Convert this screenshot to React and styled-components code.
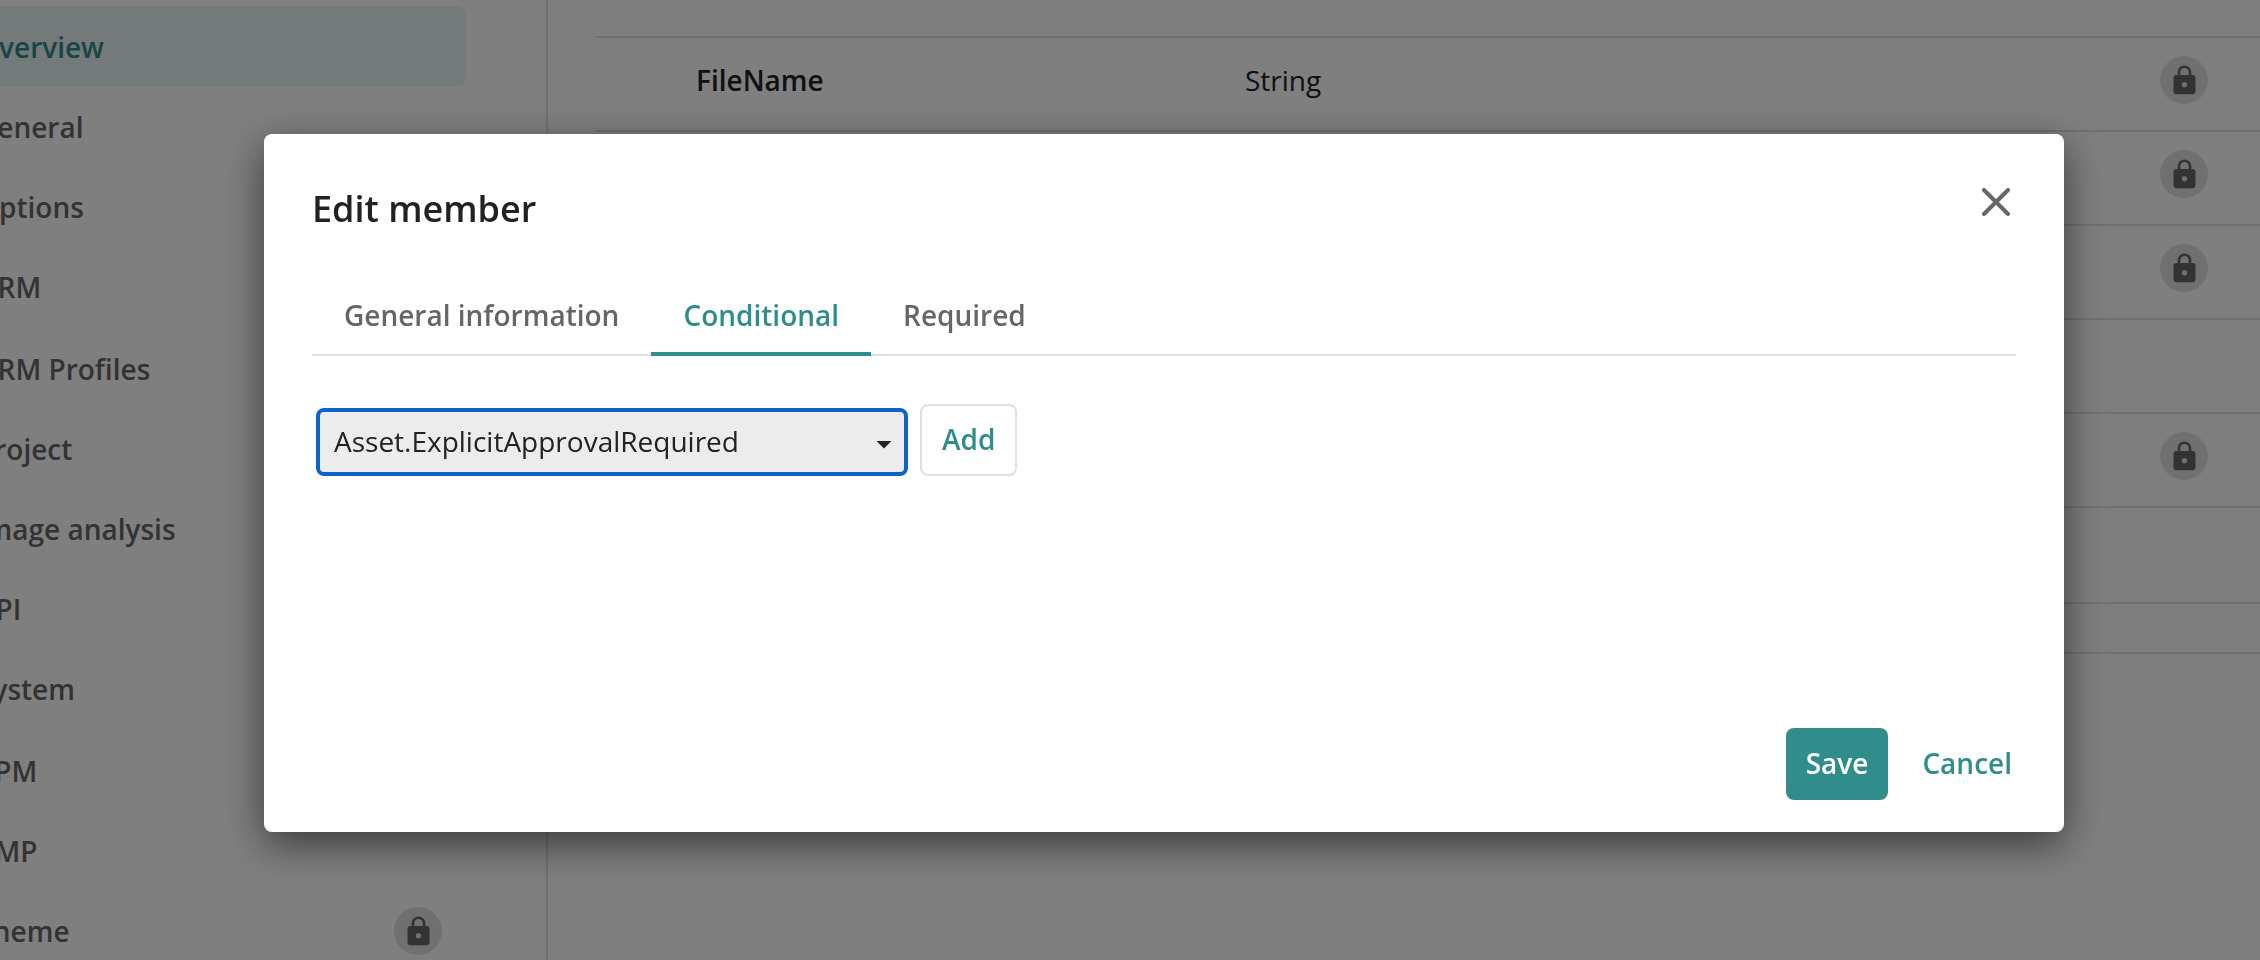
import { useState } from "react";
import styled, { createGlobalStyle } from "styled-components";
import { MdClose, MdLock, MdArrowDropDown } from "react-icons/md";

const menuGroups = [
  ["Overview", "General", "Options", "DRM"],
  ["DRM Profiles", "Project", "Image analysis", "API", "System"],
  ["PPM", "XMP", "Theme"],
];

const members = [
  { name: "FileName", type: "String", locked: true },
  { locked: true },
  { locked: true },
  {},
  { locked: true },
  {},
];

const tabs = ["General information", "Conditional", "Required"];

function Lock() {
  return (
    <LockBadge>
      <MdLock size={33} />
    </LockBadge>
  );
}

function EditMember() {
  const [active, setActive] = useState("Conditional");

  return (
    <Dialog role="dialog" aria-modal="true" aria-labelledby="dialog-title">
      <DialogHeader>
        <h2 id="dialog-title">Edit member</h2>
        <CloseButton type="button" aria-label="Close">
          <svg width="28" height="28" viewBox="0 0 28 28">
            <path
              d="M2 2l24 24M26 2L2 26"
              stroke="currentColor"
              strokeWidth="4"
              strokeLinecap="round"
            />
          </svg>
        </CloseButton>
      </DialogHeader>
      <Tabs role="tablist">
        {tabs.map((tab) => (
          <Tab
            key={tab}
            type="button"
            role="tab"
            aria-selected={tab === active}
            $active={tab === active}
            onClick={() => setActive(tab)}
          >
            {tab}
          </Tab>
        ))}
      </Tabs>
      <Condition>
        <SelectBox>
          <select aria-label="Condition" defaultValue="explicit">
            <option value="explicit">Asset.ExplicitApprovalRequired</option>
          </select>
          <MdArrowDropDown size={36} />
        </SelectBox>
        <Button type="button" $variant="outline">
          Add
        </Button>
      </Condition>
      <Actions>
        <Button type="button" $variant="primary">
          Save
        </Button>
        <Button type="button">Cancel</Button>
      </Actions>
    </Dialog>
  );
}

export default function App() {
  return (
    <>
      <GlobalStyle />
      <Page>
        <Sidebar>
          {menuGroups.map((group) => (
            <MenuGroup key={group[0]}>
              {group.map((item) => (
                <MenuItem key={item} $active={item === "Overview"}>
                  <a href="#">{item}</a>
                  {item === "Theme" && <Lock />}
                </MenuItem>
              ))}
            </MenuGroup>
          ))}
        </Sidebar>
        <Content>
          <MemberTable>
            <tbody>
              {members.map(({ name, type, locked }, i) => (
                <tr key={i}>
                  <NameCell scope="row">{name}</NameCell>
                  <td>{type}</td>
                  <LockCell>{locked && <Lock />}</LockCell>
                </tr>
              ))}
            </tbody>
          </MemberTable>
          <TableFooter />
        </Content>
      </Page>
      <Backdrop>
        <EditMember />
      </Backdrop>
    </>
  );
}

const GlobalStyle = createGlobalStyle`
  * {
    box-sizing: border-box;
  }

  body {
    margin: 0;
    overflow: hidden;
    background-color: #fff;
    color: #222;
    font-family: "Open Sans", sans-serif;
    font-size: 28px;
    line-height: 40px;
  }

  button,
  select {
    font: inherit;
    cursor: pointer;
  }

  svg {
    display: block;
  }
`;

const Page = styled.div`
  display: flex;
  height: 100vh;
  margin-left: -68px;
  overflow: hidden;
`;

const Sidebar = styled.nav`
  display: flex;
  flex-direction: column;
  flex: none;
  gap: 2px;
  width: 616px;
  padding: 6px 80px 0 0;
  border-right: 2px solid #e0e0e0;
`;

const MenuGroup = styled.ul`
  margin: 0;
  padding: 0;
  list-style: none;
`;

const MenuItem = styled.li`
  display: flex;
  align-items: center;
  justify-content: space-between;
  height: 80px;
  padding: 2px 24px 0 45px;
  border-radius: 8px;
  background-color: ${({ $active }) => ($active ? "#e8f4f3" : "transparent")};

  a {
    color: ${({ $active }) => ($active ? "#318d8b" : "#666")};
    font-weight: 600;
    text-decoration: none;
  }
`;

const LockBadge = styled.span`
  display: flex;
  align-items: center;
  justify-content: center;
  width: 48px;
  height: 48px;
  border-radius: 50%;
  background-color: #e0e0e0;
  color: #666;
`;

const Content = styled.main`
  flex: 1;
  padding: 36px 0 0 48px;
`;

const MemberTable = styled.table`
  width: 100%;
  table-layout: fixed;
  border-collapse: collapse;

  tr {
    height: 94px;
    border-top: 2px solid #e0e0e0;
  }

  th,
  td {
    padding: 0 0 8px;
    text-align: left;
  }
`;

const NameCell = styled.th`
  width: 649px;
  font-weight: 600;

  && {
    padding-left: 100px;
  }
`;

const LockCell = styled.td`
  width: 100px;
`;

const TableFooter = styled.div`
  height: 52px;
  margin-top: 1px;
  border: solid #e0e0e0;
  border-width: 2px 0;
`;

const Backdrop = styled.div`
  position: fixed;
  inset: 0;
  display: flex;
  align-items: center;
  justify-content: center;
  padding: 6px 0 0 68px;
  background-color: rgba(0, 0, 0, 0.5);
`;

const Dialog = styled.section`
  display: flex;
  flex-direction: column;
  width: 1800px;
  max-width: calc(100% - 136px);
  min-height: 698px;
  padding: 44px 48px 32px;
  border-radius: 8px;
  background-color: #fff;
  box-shadow: 0 12px 40px rgba(0, 0, 0, 0.55);
`;

const DialogHeader = styled.header`
  display: flex;
  align-items: flex-start;
  justify-content: space-between;

  h2 {
    margin: 0;
    padding-top: 8px;
    font-size: 36px;
    font-weight: 600;
    line-height: 46px;
  }
`;

const CloseButton = styled.button`
  margin-right: -4px;
  padding: 10px;
  border: 0;
  background: none;
  color: #666;
`;

const Tabs = styled.div`
  display: flex;
  margin-top: 46px;
  border-bottom: 2px solid #e0e0e0;
`;

const Tab = styled.button`
  height: 78px;
  margin-bottom: -2px;
  padding: 0 32px;
  border: 0;
  border-bottom: 4px solid
    ${({ $active }) => ($active ? "#318d8b" : "transparent")};
  background: none;
  color: ${({ $active }) => ($active ? "#318d8b" : "#666")};
  font-weight: 600;
`;

const Condition = styled.div`
  display: flex;
  align-items: flex-end;
  gap: 12px;
  margin: 48px 0 0 4px;
`;

const SelectBox = styled.div`
  position: relative;

  select {
    width: 592px;
    height: 68px;
    padding: 0 48px 2px 14px;
    border: 4px solid #0d62cb;
    border-radius: 8px;
    outline: 0;
    appearance: none;
    background-color: #ececec;
    color: #222;
  }

  svg {
    position: absolute;
    top: 18px;
    right: 6px;
    pointer-events: none;
  }
`;

const buttonColors = {
  primary: { text: "#fff", fill: "#318d8b" },
  outline: { text: "#318d8b", fill: "#fff" },
  text: { text: "#318d8b", fill: "transparent" },
};

const Button = styled.button`
  height: 72px;
  padding: 0 20px 2px;
  border: ${({ $variant }) =>
    $variant === "outline" ? "2px solid #e0e0e0" : "0"};
  border-radius: 8px;
  background-color: ${({ $variant = "text" }) => buttonColors[$variant].fill};
  color: ${({ $variant = "text" }) => buttonColors[$variant].text};
  font-weight: 600;
`;

const Actions = styled.footer`
  display: flex;
  justify-content: flex-end;
  gap: 14px;
  margin: auto -16px 0 0;
`;
